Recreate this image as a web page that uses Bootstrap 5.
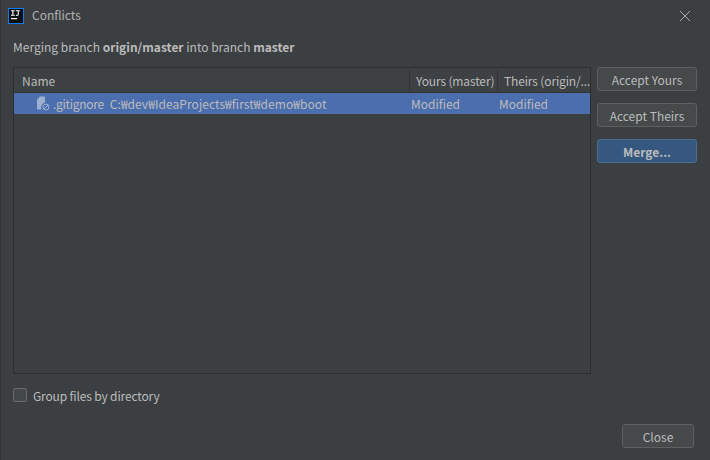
<!DOCTYPE html>
<html lang="en"><head><meta charset="utf-8"><title>Conflicts</title>
<link rel="stylesheet" href="https://cdn.jsdelivr.net/npm/bootstrap@5.3.0/dist/css/bootstrap.min.css">
<style>
html,body{background:#3c3f41;margin:0}
.dlg{width:710px;height:460px;background:#3c3f41;color:#bbbbbb;font-family:"Noto Sans CJK KR","Noto Sans",sans-serif;font-size:12px;line-height:16px;overflow:hidden;border-left:1px solid #323436}
.dlg-title{height:31px;padding:0 18px 0 7px;gap:8px}
.dlg-title .ttl{color:#afb1b3;font-size:12px;padding-bottom:2px}
.logo{width:16px;height:16px;flex:none}
.closex{width:14px;height:14px;margin-left:auto}
.sub{height:36px;padding:8px 0 0 12px}
.sub b{font-weight:700;color:#bbbbbb}
.main{padding:0 13px 0 12px;gap:6px}
.tbl{width:578px;height:307px;border:1px solid #2b2d2e;background:#3c3f41}
.thead{height:25px;border-bottom:1px solid #2f3133;background:#3e4143}
.c1{flex:none;width:395px;padding-left:8px}
.c2{flex:none;width:87px;padding-left:6px;white-space:nowrap}
.c3{flex:1;min-width:0;padding-left:6px;white-space:nowrap}
.sep{flex:none;border-left:1px solid #313335;margin:1px 0;height:21px}
.thead .c1,.thead .c2,.thead .c3{padding-top:1px}
.thead .c2,.thead .c3{letter-spacing:-.14px}
.trow{height:21px;background:#4b6eaf;color:#bbbbbb}
.trow .c1{width:395px;padding-left:22px;gap:3px}
.trow .c2{width:90px;padding-left:2px}
.trow .c3{padding-left:0}
.gi{letter-spacing:-.3px}
.path{letter-spacing:.06px;margin-left:3px}
.side{width:100px;gap:12px}
.ij-btn{height:24px;width:100px;padding:2px 0 0;background:#45494a;border:1px solid #5e6060;border-radius:3px;color:#bbbbbb;font-size:12px;line-height:18px}
.ij-btn:hover{background:#45494a;color:#bbbbbb;border-color:#5e6060}
.ij-btn.pri{background:#365880;border-color:#4c708c;font-weight:700}
.ij-btn.pri:hover{background:#365880;border-color:#4c708c}
.chkrow{height:14px;margin:14px 0 0 12px;gap:6px}
.chkbox{width:14px;height:14px;background:#43494a;border:1px solid #6b6b6b;border-radius:2px}
.chktxt{letter-spacing:-.15px;padding-top:1px}
.foot{padding:22px 16px 0 0}
.ij-btn.cl{width:72px}
</style></head><body>
<div class="dlg d-flex flex-column">
  <div class="dlg-title d-flex align-items-center">
    <svg class="logo" viewBox="0 0 16 16"><rect x=".5" y=".5" width="15" height="15" fill="#0c0c0c" stroke="#087cfa"/><rect x="3" y="10" width="6" height="1.2" fill="#fff"/><path d="M3 2.2h3.8v1H5.4v3.5h1.4v1H3v-1h1.3V3.200H3zM7.800 2.200h4v1h-1v3.100c0 1-.7 1.600-1.700 1.600-.6 0-1.100-.2-1.400-.6l.6-.7c.2.2.4.3.7.3.4 0 .7-.2.700-.8V3.200H7.800z" fill="#fff"/></svg>
    <span class="ttl">Conflicts</span>
    <svg class="closex" viewBox="0 0 14 14"><path d="M2 2l10 10M12 2L2 12" stroke="#a7a9ab" stroke-width="1" fill="none"/></svg>
  </div>
  <div class="sub">Merging branch <b>origin/master</b> into branch <b>master</b></div>
  <div class="main d-flex">
    <div class="tbl">
      <div class="thead d-flex align-items-center">
        <div class="c1">Name</div><div class="sep"></div><div class="c2">Yours (master)</div><div class="sep"></div><div class="c3">Theirs (origin/...</div>
      </div>
      <div class="trow d-flex align-items-center">
        <div class="c1 d-flex align-items-center text-nowrap">
          <svg width="14" height="16" viewBox="0 0 14 16" class="flex-shrink-0"><path d="M1 3.500L4 .5h5v6a5 5 0 0 0-3.500 7H1z" fill="#9db0d0"/><circle cx="10" cy="11" r="3" fill="none" stroke="#9db0d0" stroke-width="1"/><path d="M8 13l4-4" stroke="#9db0d0"/></svg>
          <span class="gi">.gitignore</span><span class="path">C:₩dev₩IdeaProjects₩first₩demo₩boot</span>
        </div>
        <div class="c2">Modified</div>
        <div class="c3">Modified</div>
      </div>
    </div>
    <div class="side d-flex flex-column">
      <button class="btn ij-btn" type="button">Accept Yours</button>
      <button class="btn ij-btn" type="button">Accept Theirs</button>
      <button class="btn ij-btn pri" type="button">Merge...</button>
    </div>
  </div>
  <div class="chkrow d-flex align-items-center">
    <span class="chkbox"></span><span class="chktxt">Group files by directory</span>
  </div>
  <div class="foot d-flex justify-content-end">
    <button class="btn ij-btn cl" type="button">Close</button>
  </div>
</div>
</body></html>
